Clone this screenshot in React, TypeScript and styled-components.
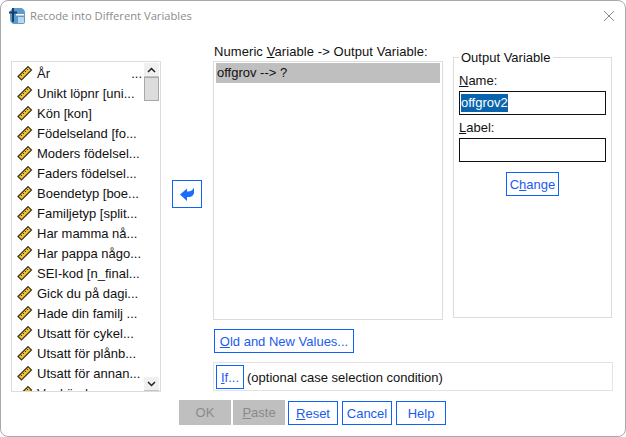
import * as React from 'react';
import styled, { createGlobalStyle } from 'styled-components';

const GlobalStyle = createGlobalStyle`
  html, body {
    margin: 0;
    padding: 0;
    background: #fff;
  }
  * { box-sizing: border-box; }
`;

const VARIABLES = [
  'Unikt löpnr [uni...',
  'Kön [kon]',
  'Födelseland [fo...',
  'Moders födelsel...',
  'Faders födelsel...',
  'Boendetyp [boe...',
  'Familjetyp [split...',
  'Har mamma nå...',
  'Har pappa någo...',
  'SEI-kod [n_final...',
  'Gick du på dagi...',
  'Hade din familj ...',
  'Utsatt för cykel...',
  'Utsatt för plånb...',
  'Utsatt för annan...',
  'Var känd av soc...',
];

function RulerIcon() {
  return (
    <svg width="16" height="16" viewBox="0 0 16 16">
      <path d="M1 11.500 11 1.500 14.500 5 4.500 15Z" fill="#f2c230" stroke="#3a3320" strokeWidth="1.2" />
      <path d="M3.500 9.500l1.500 1.500M5.500 7.500l1.500 1.500M7.500 5.500l1.500 1.500M9.500 3.500l1.500 1.500" stroke="#3a3320" strokeWidth="1" />
    </svg>
  );
}

function AppIcon() {
  return (
    <svg width="16" height="16" viewBox="0 0 16 16">
      <path d="M1 5c0-3 2-5 5-5h5c3 0 5 2 5 5v9c0 1-1 2-2 2H6c-3 0-5-2-5-5Z" fill="#5d9cc9" />
      <path d="M0 4.500h8M4 0v14" stroke="#123f6b" strokeWidth="2" fill="none" />
      <path d="M7 6h8v1.500H7Z" fill="#fff" />
      <path d="M9 9h6v6H9Z" fill="#bcd7ea" />
    </svg>
  );
}

export default function App() {
  return (
    <>
      <GlobalStyle />
      <Dialog>
        <TitleBar>
          <AppIcon />
          <Title>Recode into Different Variables</Title>
          <CloseIcon width="12" height="12" viewBox="0 0 12 12">
            <path d="M1 1l10 10M11 1 1 11" stroke="#8a8a8a" strokeWidth="1" />
          </CloseIcon>
        </TitleBar>
        <Main>
          <VariableList>
            <Rows>
              <Row>
                <RulerIcon />
                <RowName>År</RowName>
                <RowDots>...</RowDots>
              </Row>
              {VARIABLES.map((name) => (
                <Row key={name}>
                  <RulerIcon />
                  <RowName>{name}</RowName>
                </Row>
              ))}
            </Rows>
            <ScrollBar>
              <ScrollArrow>
                <svg width="9" height="6" viewBox="0 0 9 6"><path d="M1 5l3.500-3.500L8 5" stroke="#222" strokeWidth="1.5" fill="none" /></svg>
              </ScrollArrow>
              <ScrollThumb />
              <ScrollTrack />
              <ScrollArrow>
                <svg width="9" height="6" viewBox="0 0 9 6"><path d="M1 1l3.500 3.500L8 1" stroke="#222" strokeWidth="1.5" fill="none" /></svg>
              </ScrollArrow>
            </ScrollBar>
          </VariableList>

          <ArrowColumn>
            <ActionButton $w={30} $h={28}>
              <svg width="14" height="14" viewBox="0 0 14 14">
                <path d="M0 7.500 7 1.500V4.500Q12 5 14 0.500V6Q13 10 9 10H7V14Z" fill="#1a6cff" />
              </svg>
            </ActionButton>
          </ArrowColumn>

          <CenterColumn>
            <FieldLabel>Numeric <u>V</u>ariable -&gt; Output Variable:</FieldLabel>
            <MappingList>
              <MappingRow>offgrov --&gt; ?</MappingRow>
            </MappingList>
            <ValuesRow>
              <ActionButton $w={140} $h={24}><u>O</u>ld and New Values...</ActionButton>
            </ValuesRow>
            <IfBox>
              <ActionButton $w={28} $h={24}><u>I</u>f...</ActionButton>
              <span>(optional case selection condition)</span>
            </IfBox>
          </CenterColumn>

          <OutputGroup>
            <Legend>Output Variable</Legend>
            <OutputLabel><u>N</u>ame:</OutputLabel>
            <TextBox><Selected>offgrov2</Selected></TextBox>
            <SecondLabel><u>L</u>abel:</SecondLabel>
            <TextBox />
            <ChangeRow>
              <ActionButton $w={53} $h={24}>C<u>h</u>ange</ActionButton>
            </ChangeRow>
          </OutputGroup>
        </Main>
        <Footer>
          <DisabledGroup>
            <DisabledButton>OK</DisabledButton>
            <DisabledButton><u>P</u>aste</DisabledButton>
          </DisabledGroup>
          <ActionButton $w={50} $h={24}><u>R</u>eset</ActionButton>
          <ActionButton $w={50} $h={24}>Cancel</ActionButton>
          <ActionButton $w={50} $h={24}>Help</ActionButton>
        </Footer>
      </Dialog>
    </>
  );
}

const Dialog = styled.div`
  width: 626px;
  height: 437px;
  background: #fff;
  border: 1px solid #a9a9a9;
  border-radius: 8px;
  overflow: hidden;
  font-family: "Liberation Sans", Arial, sans-serif;
  font-size: 13px;
  color: #111;
  display: flex;
  flex-direction: column;
`;

const TitleBar = styled.div`
  height: 29px;
  flex: none;
  display: flex;
  align-items: center;
  padding: 0 10px 0 8px;
  gap: 5px;
`;

const Title = styled.div`
  flex: 1;
  font-family: "Open Sans", "Noto Sans", sans-serif;
  font-size: 11.2px;
  color: #8c8c8c;
`;

const CloseIcon = styled.svg`
  display: block;
`;

const Main = styled.div`
  height: 356px;
  flex: none;
  padding: 0 0 0 10px;
  margin-top: 14px;
  display: flex;
  align-items: flex-start;
`;

const VariableList = styled.div`
  width: 150px;
  height: 331px;
  flex: none;
  margin-top: 17px;
  border: 1px solid #dcdcdc;
  display: flex;
  overflow: hidden;
`;

const Rows = styled.div`
  flex: 1;
  min-width: 0;
  padding: 1px 0 0 5px;
`;

const Row = styled.div`
  height: 20px;
  display: flex;
  align-items: center;
  gap: 4px;
  white-space: nowrap;
`;

const RowName = styled.span`
  flex: 1;
`;

const RowDots = styled.span`
  margin-right: 2px;
`;

const ScrollBar = styled.div`
  width: 16px;
  height: 329px;
  flex: none;
  padding-top: 1px;
  display: flex;
  flex-direction: column;
`;

const ScrollArrow = styled.div`
  width: 15px;
  height: 14px;
  flex: none;
  background: #f0f0f0;
  border-bottom: 1px solid #c4c4c4;
  display: flex;
  align-items: center;
  justify-content: center;
`;

const ScrollThumb = styled.div`
  width: 15px;
  height: 24px;
  flex: none;
  background: #dcdcdc;
  border: 1px solid #a8a8a8;
`;

const ScrollTrack = styled.div`
  flex: 1;
  width: 15px;
`;

const ArrowColumn = styled.div`
  width: 52px;
  flex: none;
  padding: 136px 0 0 11px;
`;

const CenterColumn = styled.div`
  width: 230px;
  flex: none;
  display: flex;
  flex-direction: column;
`;

const FieldLabel = styled.div`
  height: 17px;
  line-height: 15px;
  padding-left: 1px;
  letter-spacing: 0.08px;
  white-space: nowrap;
`;

const MappingList = styled.div`
  width: 230px;
  height: 259px;
  border: 1px solid #dcdcdc;
  padding: 1px 2px;
`;

const MappingRow = styled.div`
  height: 20px;
  line-height: 20px;
  padding-left: 1px;
  background: #bfbfbf;
`;

const ValuesRow = styled.div`
  margin-top: 9px;
  padding-left: 1px;
`;

const IfBox = styled.div`
  width: 400px;
  height: 29px;
  margin-top: 9px;
  border: 1px solid #e3e3e3;
  display: flex;
  align-items: center;
  padding: 1px 0 0 2px;
  gap: 3px;
  flex: none;
  white-space: nowrap;
`;

const ActionButton = styled.div<{ $w: number; $h: number }>`
  width: ${(p) => p.$w}px;
  height: ${(p) => p.$h}px;
  flex: none;
  border: 1px solid #0f62fe;
  color: #1a5cf0;
  background: #fff;
  display: flex;
  align-items: center;
  justify-content: center;
  white-space: pre;
`;

const OutputGroup = styled.div`
  width: 159px;
  height: 261px;
  flex: none;
  margin: 13px 0 0 10px;
  border: 1px solid #dcdcdc;
  padding: 0 5px;
  display: flex;
  flex-direction: column;
`;

const Legend = styled.div`
  align-self: flex-start;
  height: 15px;
  line-height: 15px;
  margin-top: -8px;
  padding: 0 3px 0 2px;
  background: #fff;
`;

const OutputLabel = styled.div`
  height: 15px;
  line-height: 15px;
  margin-top: 8px;
`;

const SecondLabel = styled(OutputLabel)`
  margin-top: 5px;
`;

const TextBox = styled.div`
  width: 147px;
  height: 24px;
  margin-top: 3px;
  border: 1px solid #111;
  padding: 2px 1px;
  display: flex;
`;

const Selected = styled.span`
  background: #0a64ad;
  color: #fff;
  height: 18px;
  line-height: 18px;
`;

const ChangeRow = styled.div`
  margin-top: 10px;
  display: flex;
  justify-content: center;
`;

const Footer = styled.div`
  height: 25px;
  flex: none;
  display: flex;
  align-items: flex-end;
  padding-left: 178px;
  gap: 4px;
`;

const DisabledGroup = styled.div`
  display: flex;
  gap: 2px;
  margin-right: -1px;
`;

const DisabledButton = styled.div`
  width: 52px;
  height: 25px;
  background: #bfbfbf;
  color: #8a8a8a;
  display: flex;
  align-items: center;
  justify-content: center;
`;
